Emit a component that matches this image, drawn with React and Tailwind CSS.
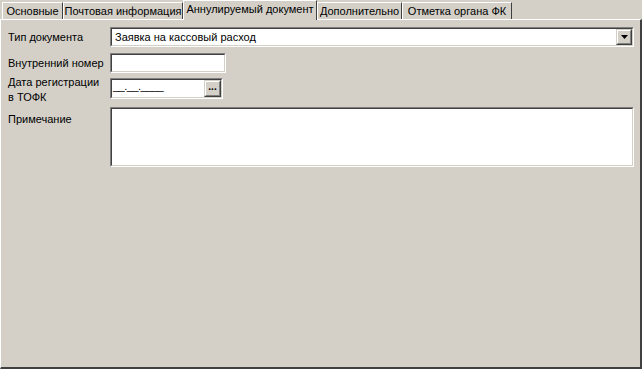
import React from "react";

function Sunken({ className = "", children }) {
  return (
    <div className={"border border-t-[#808080] border-l-[#808080] border-r-white border-b-white " + className}>
      <div className="h-full w-full border border-t-[#404040] border-l-[#404040] border-r-[#d4d0c8] border-b-[#d4d0c8] bg-white flex items-center">
        {children}
      </div>
    </div>
  );
}

function RaisedBtn({ className = "", children }) {
  return (
    <div className={"border border-t-[#d4d0c8] border-l-[#d4d0c8] border-r-[#404040] border-b-[#404040] " + className}>
      <div className="h-full w-full border border-t-white border-l-white border-r-[#808080] border-b-[#808080] bg-[#d4d0c8] flex items-center justify-center">
        {children}
      </div>
    </div>
  );
}

function Tab({ label, active, w }) {
  if (active) {
    return (
      <div className={"relative z-10 h-[20px] -mb-px bg-[#d4d0c8] border-l border-t border-white border-r border-r-[#404040] flex items-center justify-center " + w}>
        <span className="-mt-[2px]">{label}</span>
      </div>
    );
  }
  return (
    <div className={"h-[17px] mt-[2px] bg-[#d4d0c8] border-l border-t border-white border-r border-r-[#404040] flex items-center justify-center " + w}>
      <span className="mt-[1px]">{label}</span>
    </div>
  );
}

export default function App() {
  return (
    <div
      className="w-[642px] h-[369px] bg-[#d4d0c8] text-[11px] text-black overflow-hidden flex flex-col"
      style={{ fontFamily: '"Liberation Sans", Arial, sans-serif' }}
    >
      <div className="flex items-end h-[19px] pl-[2px]">
        <Tab label="Основные" w="w-[61px]" />
        <Tab label="Почтовая информация" w="w-[120px]" />
        <Tab label="Аннулируемый документ" active w="w-[134px]" />
        <Tab label="Дополнительно" w="w-[85px]" />
        <Tab label="Отметка органа ФК" w="w-[110px]" />
      </div>
      <div className="flex-1 border-l border-t border-white border-r-2 border-r-[#404040] border-b-2 border-b-[#404040] relative">
        <div className="flex flex-col pl-[7px] pt-[7px] pr-[6px]">
          <div className="flex items-center h-[20px]">
            <div className="w-[102px]">Тип документа</div>
            <Sunken className="flex-1 h-[20px]">
              <span className="pl-[3px] flex-1">Заявка на кассовый расход</span>
              <RaisedBtn className="w-[16px] h-[16px]">
                <svg width="7" height="4" viewBox="0 0 7 4"><path d="M0 0h7L3.5 4z" fill="#000" /></svg>
              </RaisedBtn>
            </Sunken>
          </div>
          <div className="flex items-center h-[20px] mt-[6px]">
            <div className="w-[102px]">Внутренний номер</div>
            <Sunken className="w-[116px] h-[20px]" />
          </div>
          <div className="flex items-start h-[21px] mt-[5px]">
            <div className="w-[102px] leading-[15px] -mt-[3px]">Дата регистрации<br />в ТОФК</div>
            <Sunken className="w-[113px] h-[21px]">
              <span className="pl-[1px] flex-1 -mt-[4px] tracking-[-0.5px]">__.__.____</span>
              <RaisedBtn className="w-[17px] h-[17px]">
                <span className="text-[10px] font-bold leading-none -mt-[3px]">...</span>
              </RaisedBtn>
            </Sunken>
          </div>
          <div className="flex items-start mt-[8px]">
            <div className="w-[102px] mt-[4px]">Примечание</div>
            <Sunken className="flex-1 h-[60px]" />
          </div>
        </div>
      </div>
    </div>
  );
}
